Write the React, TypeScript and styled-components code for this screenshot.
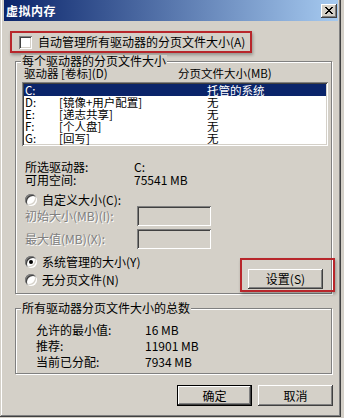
import React from 'react';
import styled, { createGlobalStyle } from 'styled-components';

const Global = createGlobalStyle`
  html, body { margin: 0; padding: 0; background: #D4D0C8; }
  body {
    font-family: "Noto Sans CJK SC", "Liberation Sans", sans-serif;
    font-size: 12px;
    color: #000;
  }
  * { box-sizing: border-box; }
`;

const Window = styled.div`
  width: 341px;
  height: 417px;
  background: #D4D0C8;
  display: flex;
  flex-direction: column;
  padding: 0 3px 3px 4px;
  box-shadow: inset -1px -1px #404040, inset 1px 0 #D4D0C8, inset -2px -2px #808080, inset 2px 0 #fff;
`;

const TitleBar = styled.div`
  height: 21px;
  display: flex;
  align-items: center;
  justify-content: space-between;
  padding: 0 1px 0 2px;
  background: linear-gradient(to right, #0A246A, #A6CAF0);
`;

const Title = styled.span`
  color: #fff;
  font-weight: bold;
  font-size: 12px;
  letter-spacing: 0.5px;
  line-height: 12px;
`;

const Raised = styled.button`
  font-family: inherit;
  font-size: 12px;
  color: #000;
  background: #D4D0C8;
  border: none;
  padding: 0;
  margin: 0;
  display: flex;
  align-items: center;
  justify-content: center;
  box-shadow: inset -1px -1px #404040, inset 1px 1px #fff, inset -2px -2px #808080, inset 2px 2px #D4D0C8;
`;

const CloseButton = styled(Raised)`
  width: 16px;
  height: 14px;
`;

const CheckRow = styled.div`
  margin: 10px 0 0 6px;
  width: 242px;
  height: 22px;
  border: 2px solid #B8262B;
  box-shadow: 1px 2px 3px rgba(0, 0, 0, 0.3);
  display: flex;
  align-items: center;
  gap: 6px;
  padding-left: 7px;
  line-height: 12px;
`;

const CheckBox = styled.span`
  width: 13px;
  height: 13px;
  background: #fff;
  box-shadow: inset 1px 1px #808080, inset -1px -1px #fff, inset 2px 2px #404040, inset -2px -2px #D4D0C8;
`;

const Group = styled.div<{ $top: number; $height: number; $pad: string }>`
  position: relative;
  margin: ${p => p.$top}px 0 0 11px;
  width: 317px;
  height: ${p => p.$height}px;
  border: 1px solid #808080;
  box-shadow: inset 1px 1px #fff, 1px 1px #fff;
  padding: ${p => p.$pad};
  display: flex;
  flex-direction: column;
`;

const Legend = styled.span`
  position: absolute;
  top: -7px;
  left: 5px;
  padding: 0 1px;
  background: #D4D0C8;
  line-height: 12px;
`;

const Header = styled.div`
  display: grid;
  grid-template-columns: 154px 1fr;
  padding-left: 2px;
  height: 12px;
  line-height: 12px;
  font-size: 11.5px;
`;

const ListBox = styled.div`
  margin-top: 3px;
  width: 306px;
  height: 64px;
  background: #fff;
  padding: 2px;
  box-shadow: inset 1px 1px #808080, inset -1px -1px #fff, inset 2px 2px #404040, inset -2px -2px #D4D0C8;
`;

const ListRow = styled.div<{ $sel?: boolean }>`
  display: grid;
  grid-template-columns: 34px 148px 1fr;
  height: 12px;
  line-height: 12px;
  font-size: 11.5px;
  padding-left: 1px;
  background: ${p => (p.$sel ? '#0A246A' : 'transparent')};
  color: ${p => (p.$sel ? '#fff' : '#000')};
  white-space: nowrap;
`;

const Info = styled.div`
  margin-top: 14px;
  padding-left: 3px;
  display: grid;
  grid-template-columns: 109px 1fr;
  grid-auto-rows: 13px;
  line-height: 13px;
`;

const RadioRow = styled.div<{ $mt?: number }>`
  margin-top: ${p => p.$mt ?? 0}px;
  padding-left: 3px;
  height: 13px;
  display: flex;
  align-items: center;
  gap: 5px;
  line-height: 13px;
`;

const Radio = styled.span<{ $on?: boolean }>`
  width: 12px;
  height: 12px;
  border-radius: 50%;
  background: #fff;
  display: flex;
  align-items: center;
  justify-content: center;
  box-shadow: inset 1px 1px #808080, inset -1px -1px #fff, inset 2px 2px #404040, inset -2px -2px #D4D0C8;
  &::after {
    content: '';
    width: 4px;
    height: 4px;
    border-radius: 50%;
    background: ${p => (p.$on ? '#000' : 'transparent')};
  }
`;

const FieldRows = styled.div`
  display: flex;
  flex-direction: column;
  gap: 3px;
`;

const FieldRow = styled.div`
  display: grid;
  grid-template-columns: 112px 74px;
  align-items: center;
  padding-left: 3px;
  height: 20px;
`;

const Disabled = styled.span`
  color: #808080;
  text-shadow: 1px 1px #fff;
  line-height: 12px;
`;

const Input = styled.span`
  width: 74px;
  height: 20px;
  background: #D4D0C8;
  box-shadow: inset 1px 1px #808080, inset -1px -1px #fff, inset 2px 2px #404040, inset -2px -2px #D4D0C8;
`;

const Bottom = styled.div`
  margin-top: 6px;
  height: 34px;
  display: flex;
  justify-content: space-between;
`;

const RadioCol = styled.div`
  display: flex;
  flex-direction: column;
  gap: 5px;
`;

const SetWrap = styled.div`
  position: relative;
  align-self: flex-end;
  margin-right: 3px;
`;

const Annotation = styled.span`
  position: absolute;
  top: -11px;
  left: -8px;
  right: -12px;
  bottom: -3px;
  border: 2px solid #B8262B;
  box-shadow: 1px 2px 3px rgba(0, 0, 0, 0.3);
  pointer-events: none;
`;

const PushButton = styled(Raised)<{ $h?: number }>`
  width: 75px;
  height: ${p => p.$h ?? 20}px;
  line-height: 12px;
`;

const DefaultButton = styled(PushButton)`
  box-shadow: inset 0 0 0 1px #000, inset -2px -2px #404040, inset 2px 2px #fff, inset -3px -3px #808080;
`;

const Totals = styled.div`
  padding-left: 10px;
  display: grid;
  grid-template-columns: 109px 1fr;
  grid-auto-rows: 16px;
  line-height: 16px;
`;

const Footer = styled.div`
  margin: 11px 5px 0 0;
  display: flex;
  justify-content: flex-end;
  gap: 6px;
`;

const drives = [
  { d: 'C:', l: '', s: '托管的系统', sel: true },
  { d: 'D:', l: '[镜像+用户配置]', s: '无' },
  { d: 'E:', l: '[递志共享]', s: '无' },
  { d: 'F:', l: '[个人盘]', s: '无' },
  { d: 'G:', l: '[回写]', s: '无' },
];

export default function App() {
  return (
    <>
      <Global />
      <Window>
        <TitleBar>
          <Title>虚拟内存</Title>
          <CloseButton aria-label="关闭">
            <svg width="8" height="7" viewBox="0 0 8 7" shapeRendering="crispEdges">
              <path d="M0 0h2v1h-2zM6 0h2v1h-2zM1 1h2v1h-2zM5 1h2v1h-2zM2 2h4v1h-4zM3 3h2v1h-2zM2 4h4v1h-4zM1 5h2v1h-2zM5 5h2v1h-2zM0 6h2v1h-2zM6 6h2v1h-2z" fill="#000" />
            </svg>
          </CloseButton>
        </TitleBar>

        <CheckRow>
          <CheckBox />
          <span>自动管理所有驱动器的分页文件大小(A)</span>
        </CheckRow>

        <Group $top={8} $height={233} $pad="5px 5px 0 6px">
          <Legend>每个驱动器的分页文件大小</Legend>
          <Header>
            <span>驱动器 [卷标](D)</span>
            <span>分页文件大小(MB)</span>
          </Header>
          <ListBox>
            {drives.map(r => (
              <ListRow key={r.d} $sel={r.sel}>
                <span>{r.d}</span>
                <span>{r.l}</span>
                <span>{r.s}</span>
              </ListRow>
            ))}
          </ListBox>
          <Info>
            <span>所选驱动器:</span>
            <span>C:</span>
            <span>可用空间:</span>
            <span>75541 MB</span>
          </Info>
          <RadioRow $mt={7}>
            <Radio />
            <span>自定义大小(C):</span>
          </RadioRow>
          <FieldRows>
            <FieldRow>
              <Disabled>初始大小(MB)(I):</Disabled>
              <Input />
            </FieldRow>
            <FieldRow>
              <Disabled>最大值(MB)(X):</Disabled>
              <Input />
            </FieldRow>
          </FieldRows>
          <Bottom>
            <RadioCol>
              <RadioRow>
                <Radio $on />
                <span>系统管理的大小(Y)</span>
              </RadioRow>
              <RadioRow>
                <Radio />
                <span>无分页文件(N)</span>
              </RadioRow>
            </RadioCol>
            <SetWrap>
              <PushButton>设置(S)</PushButton>
              <Annotation />
            </SetWrap>
          </Bottom>
        </Group>

        <Group $top={14} $height={66} $pad="13px 0 0 10px">
          <Legend>所有驱动器分页文件大小的总数</Legend>
          <Totals>
            <span>允许的最小值:</span>
            <span>16 MB</span>
            <span>推荐:</span>
            <span>11901 MB</span>
            <span>当前已分配:</span>
            <span>7934 MB</span>
          </Totals>
        </Group>

        <Footer>
          <DefaultButton $h={21}>确定</DefaultButton>
          <PushButton $h={21}>取消</PushButton>
        </Footer>
      </Window>
    </>
  );
}
